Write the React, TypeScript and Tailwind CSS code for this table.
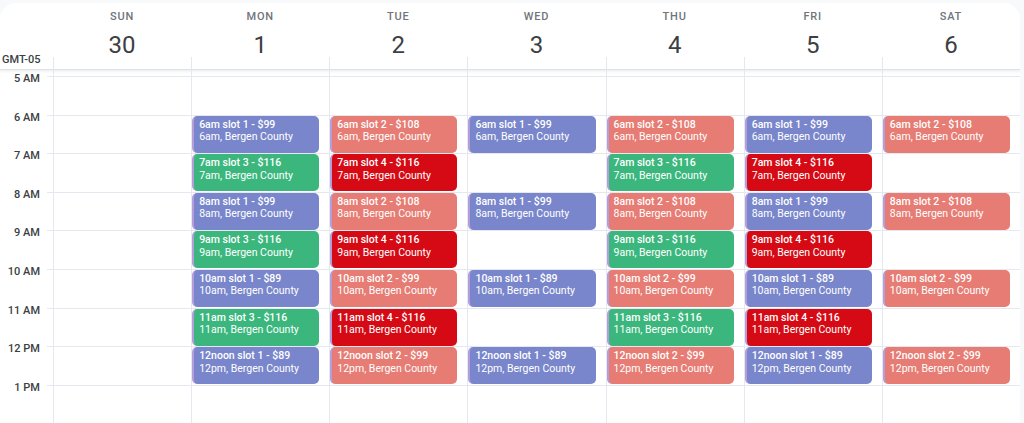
import React from 'react';

type Color = 'blue' | 'salmon' | 'green' | 'red';

type Slot = { title: string; place: string; color: Color } | null;

const DAYS = [
  { name: 'SUN', date: '30' },
  { name: 'MON', date: '1' },
  { name: 'TUE', date: '2' },
  { name: 'WED', date: '3' },
  { name: 'THU', date: '4' },
  { name: 'FRI', date: '5' },
  { name: 'SAT', date: '6' },
];

const HOURS = ['5 AM', '6 AM', '7 AM', '8 AM', '9 AM', '10 AM', '11 AM', '12 PM', '1 PM', ''];

const COLOR_CLASS: Record<Color, string> = {
  blue: 'bg-[#7986cb]',
  salmon: 'bg-[#e67c73]',
  green: 'bg-[#3bb77d]',
  red: 'bg-[#d50a14]',
};

// one entry per hour row (5am .. 1pm)
const HOUR_KEYS = ['5am', '6am', '7am', '8am', '9am', '10am', '11am', '12noon', '1pm', ''];
const PLACE_KEYS = ['5am', '6am', '7am', '8am', '9am', '10am', '11am', '12pm', '1pm', ''];

const mk = (row: number, slot: number, price: number, color: Color): Slot => ({
  title: `${HOUR_KEYS[row]} slot ${slot} - $${price}`,
  place: `${PLACE_KEYS[row]}, Bergen County`,
  color,
});

// columns: day index -> row index -> slot
const buildDay = (day: number): Slot[] => {
  const rows: Slot[] = HOURS.map(() => null);
  for (let r = 1; r <= 7; r++) {
    const hour = r + 5; // 6..12
    const even = hour % 2 === 0;
    const price = (slot: number) => {
      if (slot === 1) return hour >= 10 ? 89 : 99;
      if (slot === 2) return hour >= 10 ? 99 : 108;
      return 116;
    };
    if (day === 1) rows[r] = even ? mk(r, 1, price(1), 'blue') : mk(r, 3, 116, 'green');
    if (day === 2) rows[r] = even ? mk(r, 2, price(2), 'salmon') : mk(r, 4, 116, 'red');
    if (day === 3) rows[r] = even ? mk(r, 1, price(1), 'blue') : null;
    if (day === 4) rows[r] = even ? mk(r, 2, price(2), 'salmon') : mk(r, 3, 116, 'green');
    if (day === 5) rows[r] = even ? mk(r, 1, price(1), 'blue') : mk(r, 4, 116, 'red');
    if (day === 6) rows[r] = even ? mk(r, 2, price(2), 'salmon') : null;
  }
  return rows;
};

const GRID = DAYS.map((_, i) => buildDay(i));

const Event: React.FC<{ slot: NonNullable<Slot> }> = ({ slot }) => (
  <div
    className={`mr-[10px] h-[37px] rounded-[5px] border-l-2 border-[#b39ddb] pl-[5px] pt-[3px] text-[10.5px] leading-[12.5px] text-white ${COLOR_CLASS[slot.color]}`}
  >
    <div className="font-medium whitespace-nowrap">{slot.title}</div>
    <div className="whitespace-nowrap">{slot.place}</div>
  </div>
);

export default function App() {
  return (
    <div className="h-[423px] w-full overflow-hidden bg-[#f8f9fb] pt-[3px] font-['Roboto',sans-serif]">
      <div className="mr-[4px] h-[420px] overflow-hidden rounded-t-2xl bg-white">
        {/* header */}
        <div className="flex h-[67px] border-b border-[#dfe1e7] shadow-[0_1px_3px_rgba(60,64,67,0.12)]">
          <div className="flex w-[53px] shrink-0 flex-col justify-end">
            <div className="flex items-end">
              <span className="mb-[2px] pl-[2px] text-[11px] font-medium leading-[14px] text-[#3c4043]">GMT-05</span>
            </div>
          </div>
          {DAYS.map((d) => (
            <div key={d.name} className="flex flex-1 flex-col items-center">
              <div className="mt-[6px] text-[11px] font-medium leading-[16px] tracking-[0.8px] text-[#70757a]">{d.name}</div>
              <div className="mt-[8px] text-[24px] leading-[24px] text-[#3c4043]">{d.date}</div>
              <div className="mt-auto h-[14px] self-stretch border-l border-[#e6e8ef]" />
            </div>
          ))}
        </div>

        {/* spacer row */}
        <div className="flex h-[6px]">
          <div className="w-[53px] shrink-0" />
          {DAYS.map((d) => (
            <div key={d.name} className="flex-1 border-l border-[#e6e8ef]" />
          ))}
        </div>

        {/* hour rows */}
        {HOURS.map((h, r) => (
          <div key={r} className="flex h-[38.6px]">
            <div className="flex w-[53px] shrink-0 items-start">
              <span className="-mt-[4px] w-[41px] pr-[1px] text-right text-[11px] font-medium leading-[14px] text-[#3c4043]">
                {h}
              </span>
              <div className="ml-auto h-0 w-[6px] border-t border-[#e6e8ef]" />
            </div>
            {GRID.map((col, c) => {
              const slot = col[r];
              return (
                <div key={c} className="flex-1 border-l border-t border-[#e6e8ef]">
                  {slot && <Event slot={slot} />}
                </div>
              );
            })}
          </div>
        ))}
      </div>
    </div>
  );
}
